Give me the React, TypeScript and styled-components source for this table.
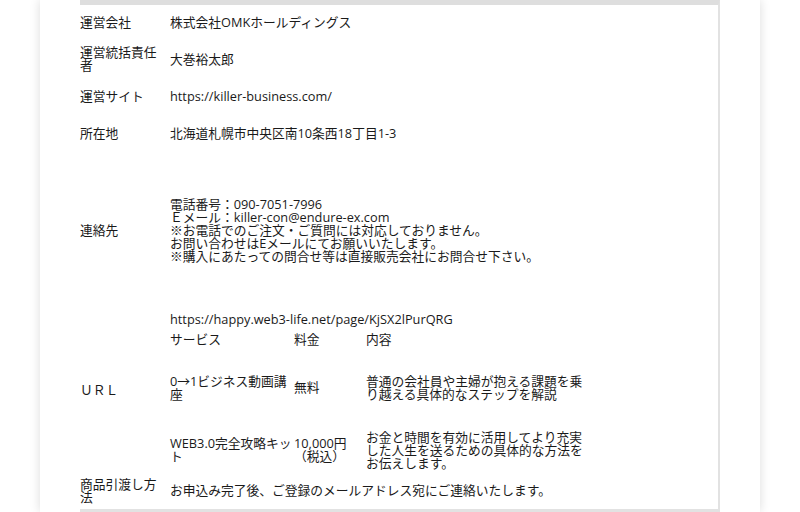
import React from "react";
import styled, { createGlobalStyle } from "styled-components";

const GlobalStyle = createGlobalStyle`
  html, body {
    margin: 0;
    padding: 0;
    background: #ffffff;
  }
  body {
    font-family: "Open Sans", "Noto Sans CJK JP", sans-serif;
    color: #1a1a1a;
  }
`;

const Page = styled.div`
  width: 800px;
  height: 512px;
  overflow: hidden;
  display: flex;
  justify-content: center;
`;

const Panel = styled.main`
  width: 640px;
  padding: 0 40px;
  background: #ffffff;
  box-shadow: 0 0 10px rgba(0, 0, 0, 0.14);
`;

const InfoTable = styled.section`
  box-sizing: border-box;
  width: 640px;
  border-top: 5px solid #dedede;
  border-right: 2px solid #e2e2e2;
  border-bottom: 3px solid #e2e2e2;
`;

const Row = styled.div<{ $h: number }>`
  display: grid;
  grid-template-columns: 90px 1fr;
  align-items: center;
  height: ${(p) => p.$h}px;
  font-size: 12.75px;
  line-height: 13px;
`;

const Label = styled.div`
  padding-right: 6px;
`;

const Value = styled.div<{ $padTop?: number }>`
  align-self: ${(p) => (p.$padTop !== undefined ? "start" : "center")};
  padding-top: ${(p) => p.$padTop ?? 0}px;
`;

const ServiceTable = styled.div`
  display: flex;
  flex-direction: column;
  width: 421px;
`;

const ServiceRow = styled.div<{ $pt: number; $pb: number }>`
  display: grid;
  grid-template-columns: 124px 72px 225px;
  align-items: center;
  padding-top: ${(p) => p.$pt}px;
  padding-bottom: ${(p) => p.$pb}px;
`;

const Cell = styled.div``;

const rows: { label: React.ReactNode; value: React.ReactNode; h: number }[] = [
  { label: "運営会社", value: "株式会社OMKホールディングス", h: 35 },
  { label: "運営統括責任者", value: "大巻裕太郎", h: 38 },
  { label: "運営サイト", value: "https://killer-business.com/", h: 37 },
  { label: "所在地", value: "北海道札幌市中央区南10条西18丁目1-3", h: 37 },
  {
    label: "連絡先",
    value: (
      <>
        電話番号：090-7051-7996
        <br />
        Ｅメール：killer-con@endure-ex.com
        <br />
        ※お電話でのご注文・ご質問には対応しておりません。
        <br />
        お問い合わせはEメールにてお願いいたします。
        <br />
        ※購入にあたっての問合せ等は直接販売会社にお問合せ下さい。
      </>
    ),
    h: 156,
  },
];

const services = [
  {
    name: "0→1ビジネス動画講座",
    price: "無料",
    desc: "普通の会社員や主婦が抱える課題を乗り越える具体的なステップを解説",
    pt: 22.5,
    pb: 15,
  },
  {
    name: "WEB3.0完全攻略キット",
    price: "10,000円（税込）",
    desc: "お金と時間を有効に活用してより充実した人生を送るための具体的な方法をお伝えします。",
    pt: 15,
    pb: 0,
  },
];

export default function App() {
  return (
    <>
      <GlobalStyle />
      <Page>
        <Panel>
          <InfoTable>
            {rows.map((r, i) => (
              <Row key={i} $h={r.h}>
                <Label>{r.label}</Label>
                <Value>{r.value}</Value>
              </Row>
            ))}
            <Row $h={164}>
              <Label>ＵＲＬ</Label>
              <Value $padTop={5}>
                <div>https://happy.web3-life.net/page/KjSX2lPurQRG</div>
                <ServiceTable>
                  <ServiceRow $pt={6.5} $pb={6.5}>
                    <Cell>サービス</Cell>
                    <Cell>料金</Cell>
                    <Cell>内容</Cell>
                  </ServiceRow>
                  {services.map((s) => (
                    <ServiceRow key={s.name} $pt={s.pt} $pb={s.pb}>
                      <Cell>{s.name}</Cell>
                      <Cell>{s.price}</Cell>
                      <Cell>{s.desc}</Cell>
                    </ServiceRow>
                  ))}
                </ServiceTable>
              </Value>
            </Row>
            <Row $h={37}>
              <Label>商品引渡し方法</Label>
              <Value>お申込み完了後、ご登録のメールアドレス宛にご連絡いたします。</Value>
            </Row>
          </InfoTable>
        </Panel>
      </Page>
    </>
  );
}
